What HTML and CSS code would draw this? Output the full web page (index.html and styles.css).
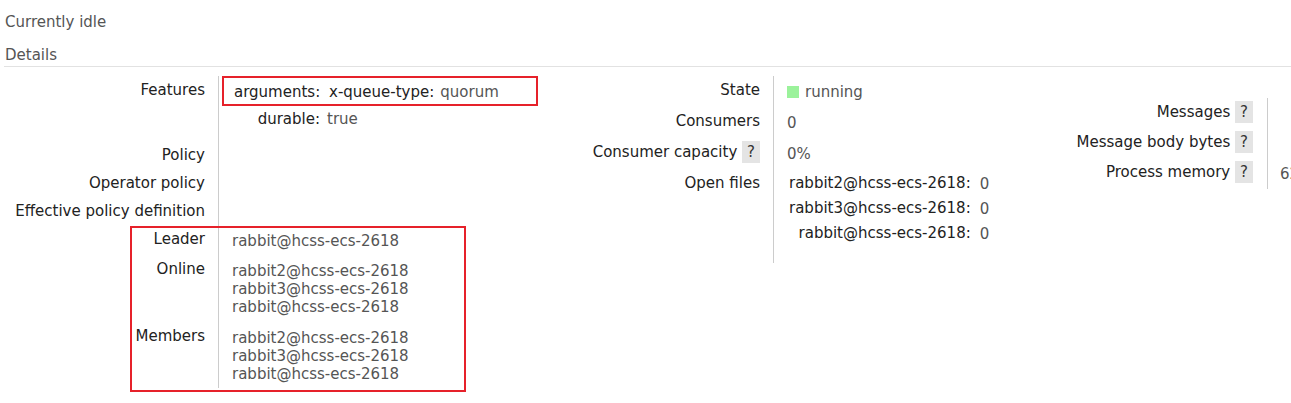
FILE: index.html
```html
<!DOCTYPE html>
<html lang="en">
<head>
<meta charset="utf-8">
<title>Queue details</title>
<link rel="stylesheet" href="styles.css">
</head>
<body>
<div class="page">
  <p class="status">Currently idle</p>
  <h2 class="section-title">Details</h2>
  <div class="facts-row">
    <div class="facts facts-left">
      <div class="fact fact-features">
        <div class="fact-label">Features</div>
        <div class="fact-value">
          <div class="mark-box">
            <span class="mini-key">arguments:</span>
            <span class="mini-key2">x-queue-type:</span>
            <span class="mini-val">quorum</span>
          </div>
          <div class="mini-line">
            <span class="mini-key mini-key-wide">durable:</span>
            <span class="mini-val">true</span>
          </div>
        </div>
      </div>
      <div class="fact fact-empty">
        <div class="fact-label">Policy</div>
        <div class="fact-value"></div>
      </div>
      <div class="fact fact-empty">
        <div class="fact-label">Operator policy</div>
        <div class="fact-value"></div>
      </div>
      <div class="fact fact-empty">
        <div class="fact-label">Effective policy definition</div>
        <div class="fact-value"></div>
      </div>
      <div class="marked-group">
        <div class="fact">
          <div class="fact-label">Leader</div>
          <div class="fact-value">rabbit@hcss-ecs-2618</div>
        </div>
        <div class="fact fact-online">
          <div class="fact-label">Online</div>
          <div class="fact-value">
            <div>rabbit2@hcss-ecs-2618</div>
            <div>rabbit3@hcss-ecs-2618</div>
            <div>rabbit@hcss-ecs-2618</div>
          </div>
        </div>
        <div class="fact">
          <div class="fact-label">Members</div>
          <div class="fact-value">
            <div>rabbit2@hcss-ecs-2618</div>
            <div>rabbit3@hcss-ecs-2618</div>
            <div>rabbit@hcss-ecs-2618</div>
          </div>
        </div>
      </div>
    </div>

    <div class="facts facts-mid">
      <div class="fact">
        <div class="fact-label">State</div>
        <div class="fact-value"><span class="state-dot"></span><span class="state-text">running</span></div>
      </div>
      <div class="fact">
        <div class="fact-label">Consumers</div>
        <div class="fact-value">0</div>
      </div>
      <div class="fact">
        <div class="fact-label">Consumer capacity <span class="help">?</span></div>
        <div class="fact-value">0%</div>
      </div>
      <div class="fact">
        <div class="fact-label">Open files</div>
        <div class="fact-value files">
          <div class="files-grid">
            <span class="files-key">rabbit2@hcss-ecs-2618:</span><span class="files-val">0</span>
            <span class="files-key">rabbit3@hcss-ecs-2618:</span><span class="files-val">0</span>
            <span class="files-key">rabbit@hcss-ecs-2618:</span><span class="files-val">0</span>
          </div>
        </div>
      </div>
    </div>

    <div class="facts facts-right">
      <div class="fact">
        <div class="fact-label">Messages <span class="help">?</span></div>
        <div class="fact-value"></div>
      </div>
      <div class="fact">
        <div class="fact-label">Message body bytes <span class="help">?</span></div>
        <div class="fact-value"></div>
      </div>
      <div class="fact">
        <div class="fact-label">Process memory <span class="help">?</span></div>
        <div class="fact-value">62 KiB</div>
      </div>
    </div>
  </div>
</div>
</body>
</html>
```

FILE: styles.css
```css
html, body {
  margin: 0;
  padding: 0;
  background: #ffffff;
}

body {
  width: 1291px;
  height: 403px;
  overflow: hidden;
  font-family: "DejaVu Sans", Verdana, sans-serif;
  font-size: 15px;
  line-height: 18px;
  color: #555555;
}

.page {
  width: 1291px;
}

.status {
  margin: 0;
  padding: 13px 0 0 5px;
  color: #555555;
}

.section-title {
  margin: 15px 0 0 4px;
  padding: 0 0 2px 1px;
  font-size: 15px;
  font-weight: normal;
  line-height: 18px;
  color: #555555;
  border-bottom: 1px solid #e2e2e2;
}

.facts-row {
  display: flex;
  flex-wrap: nowrap;
  align-items: flex-start;
  margin-top: 9px;
  padding-left: 5px;
}

.facts {
  display: flex;
  flex-direction: column;
  flex: none;
}

.fact {
  display: flex;
  align-items: stretch;
}

.fact-label {
  flex: none;
  box-sizing: border-box;
  text-align: right;
  color: #222222;
  padding: 5px 13px 5px 0;
  white-space: nowrap;
}

.fact-value {
  flex: none;
  box-sizing: border-box;
  border-left: 1px solid #cccccc;
  padding: 7px 0 5px 13px;
  white-space: nowrap;
}

/* left column */
.facts-left {
  width: 570px;
}

.facts-left .fact-label {
  width: 213px;
}

.facts-left .fact-value {
  width: 357px;
}

.fact-features .fact-value {
  padding: 0 0 13px 0;
}

.mark-box {
  box-sizing: border-box;
  width: 316px;
  margin-left: 3px;
  border: 2px solid #e6212a;
  padding: 5px 0 3px 10px;
  display: flex;
}

.mini-key {
  display: inline-block;
  width: 86px;
  text-align: right;
  color: #222222;
}

.mini-key2 {
  margin-left: 9px;
  color: #222222;
}

.mark-box .mini-val {
  margin-left: 6px;
}

.mini-line {
  display: flex;
  margin-top: 4px;
}

.mini-key-wide {
  width: 101px;
}

.mini-line .mini-val {
  margin-left: 7px;
}

.fact-empty .fact-value {
  padding: 0;
}

.fact-online .fact-value {
  padding-bottom: 6px;
}

.marked-group {
  position: relative;
}

.marked-group::after {
  content: "";
  position: absolute;
  top: 1px;
  bottom: -4px;
  left: 125px;
  width: 336px;
  box-sizing: border-box;
  border: 2px solid #e6212a;
  pointer-events: none;
}

/* middle column */
.facts-mid .fact-label {
  width: 198px;
}

.facts-mid .fact-value {
  width: 267px;
  padding: 7px 0 6px 13px;
}

.state-dot {
  display: inline-block;
  width: 12px;
  height: 12px;
  background: #9bf29b;
  vertical-align: -1px;
}

.state-text {
  margin-left: 6px;
}

.facts-mid .fact-value.files {
  padding: 1px 0 18px 15px;
}

.files-grid {
  display: grid;
  grid-template-columns: auto auto;
  column-gap: 9px;
  justify-content: start;
}

.files-key {
  text-align: right;
  color: #222222;
  padding: 4px 0 3px 0;
}

.files-val {
  padding: 5px 0 2px 0;
}

.help {
  display: inline-block;
  background: #e4e4e4;
  color: #333333;
  padding: 2px 5px;
  margin: -2px 0;
  line-height: 18px;
}

/* right column */
.facts-right {
  margin-top: 22px;
}

.facts-right .fact-label {
  width: 227px;
  padding: 5px 14px 7px 0;
}

.facts-right .fact-value {
  width: 200px;
  padding: 7px 0 6px 12px;
}
```
